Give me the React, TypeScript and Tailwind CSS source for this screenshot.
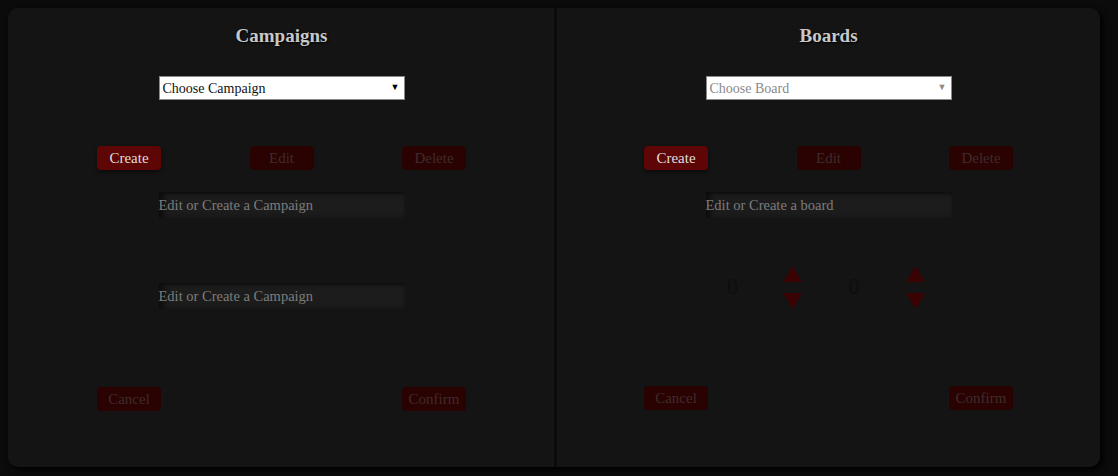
import React from "react";

const serif = { fontFamily: '"Liberation Serif", "DejaVu Serif", serif' };

function ActionButton({
  label,
  active = false,
}: {
  label: string;
  active?: boolean;
}) {
  return (
    <button
      className={
        active
          ? "w-[64px] h-[24px] rounded-[4px] bg-[#5e0505] text-[15px] text-[#dedede] shadow-[0_2px_4px_rgba(0,0,0,0.5)]"
          : "w-[64px] h-[24px] rounded-[4px] bg-[#2a0202] text-[15px] text-[#3e2c2c]"
      }
    >
      {label}
    </button>
  );
}

function FakeSelect({ text, dim = false }: { text: string; dim?: boolean }) {
  return (
    <div className="w-[246px] h-[24px] bg-white border border-[#8a8a8a] flex items-center justify-between pl-[3px] pr-[4px]">
      <span
        className={
          dim ? "text-[14px] text-[#8a8a8a]" : "text-[14px] text-[#111]"
        }
      >
        {text}
      </span>
      <span
        className={dim ? "text-[9px] text-[#8a8a8a]" : "text-[9px] text-black"}
      >
        ▼
      </span>
    </div>
  );
}

function TextField({ placeholder }: { placeholder: string }) {
  return (
    <div className="w-[246px] h-[26px] pt-[2px] bg-[#1c1c1c] shadow-[inset_6px_0_6px_-2px_#0c0c0c,inset_0_2px_3px_#111] flex items-center">
      <span className="text-[14.5px] text-[#7c7c7c]">{placeholder}</span>
    </div>
  );
}

function Triangle({ down = false }: { down?: boolean }) {
  return (
    <svg width="19" height="16" viewBox="0 0 19 16">
      <polygon
        points={down ? "0,0 19,0 9.5,16" : "9.5,0 19,16 0,16"}
        fill="#3a0202"
      />
    </svg>
  );
}

function Counter() {
  return (
    <div className="w-[66px] flex flex-col items-center gap-[11px]">
      <Triangle />
      <Triangle down />
    </div>
  );
}

function Panel({
  title,
  className,
  children,
}: {
  title: string;
  className: string;
  children: React.ReactNode;
}) {
  return (
    <div className={className}>
      <h1 className="h-[24px] leading-[24px] text-[19px] font-bold text-[#c8c8c8] [text-shadow:1px_1px_2px_#000]">
        {title}
      </h1>
      {children}
    </div>
  );
}

export default function App() {
  return (
    <div
      className="w-[1118px] h-[476px] bg-[#0b0b0b] pl-[8px] pt-[8px] overflow-hidden"
      style={serif}
    >
      <div className="w-[1092px] h-[459px] bg-[#141414] rounded-[10px] flex shadow-[3px_3px_6px_#000]">
        {/* Campaigns */}
        <Panel
          title="Campaigns"
          className="w-[546px] pl-[1px] flex flex-col items-center pt-[16px]"
        >
          <div className="mt-[28px]">
            <FakeSelect text="Choose Campaign" />
          </div>
          <div className="mt-[46px] w-[369px] flex justify-between">
            <ActionButton label="Create" active />
            <ActionButton label="Edit" />
            <ActionButton label="Delete" />
          </div>
          <div className="mt-[22px]">
            <TextField placeholder="Edit or Create a Campaign" />
          </div>
          <div className="mt-[65px]">
            <TextField placeholder="Edit or Create a Campaign" />
          </div>
          <div className="mt-[78px] w-[369px] flex justify-between">
            <ActionButton label="Cancel" />
            <ActionButton label="Confirm" />
          </div>
        </Panel>

        <div className="w-[3px] bg-[#0b0b0b]" />

        {/* Boards */}
        <Panel
          title="Boards"
          className="flex-1 flex flex-col items-center pt-[16px]"
        >
          <div className="mt-[28px]">
            <FakeSelect text="Choose Board" dim />
          </div>
          <div className="mt-[46px] w-[369px] flex justify-between">
            <ActionButton label="Create" active />
            <ActionButton label="Edit" />
            <ActionButton label="Delete" />
          </div>
          <div className="mt-[22px]">
            <TextField placeholder="Edit or Create a board" />
          </div>
          <div className="mt-[48px] w-[246px] flex items-center">
            <div className="w-[54px] text-center text-[23px] text-[#0e0e0e]">
              0
            </div>
            <Counter />
            <div className="w-[57px] text-center text-[23px] text-[#0e0e0e]">
              0
            </div>
            <Counter />
          </div>
          <div className="mt-[77px] w-[369px] flex justify-between">
            <ActionButton label="Cancel" />
            <ActionButton label="Confirm" />
          </div>
        </Panel>
      </div>
    </div>
  );
}
